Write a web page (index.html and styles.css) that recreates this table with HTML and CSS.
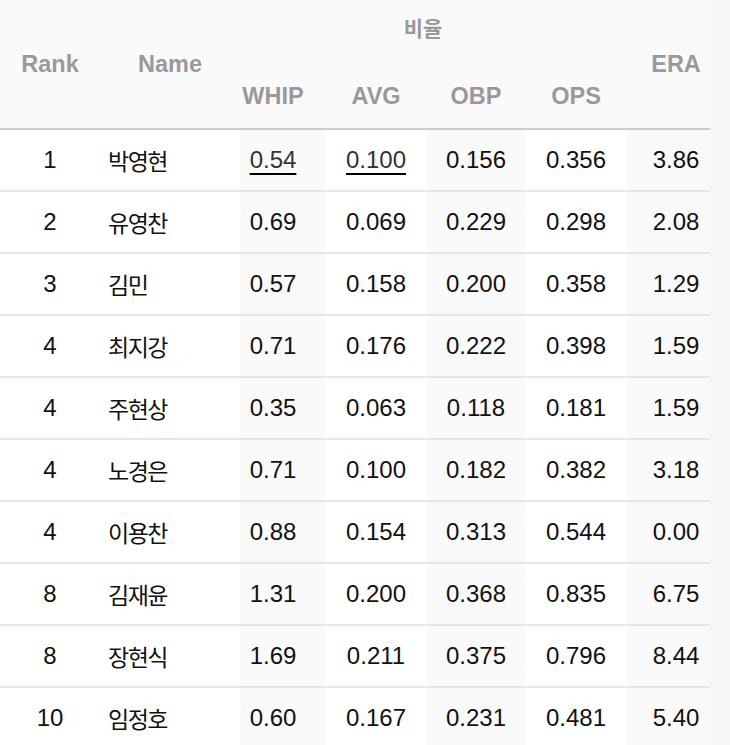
FILE: index.html
```html
<!DOCTYPE html>
<html lang="ko">
<head>
<meta charset="utf-8">
<title>비율</title>
<link rel="stylesheet" href="styles.css">
</head>
<body>
<div class="wrap">
  <table class="stats">
    <colgroup>
      <col class="c-rank"><col class="c-name"><col class="c-whip"><col class="c-avg"><col class="c-obp"><col class="c-ops"><col class="c-era">
    </colgroup>
    <thead>
      <tr class="h1">
        <th rowspan="2" class="rank">Rank</th>
        <th rowspan="2" class="name">Name</th>
        <th colspan="4" class="group">비율</th>
        <th rowspan="2" class="era">ERA</th>
      </tr>
      <tr class="h2">
        <th class="whip">WHIP</th>
        <th class="avg">AVG</th>
        <th class="obp">OBP</th>
        <th class="ops">OPS</th>
      </tr>
    </thead>
    <tbody>
      <tr><td class="rank">1</td><td class="name">박영현</td><td class="whip alt"><span class="ul">0.54</span></td><td class="avg"><span class="ul">0.100</span></td><td class="obp alt">0.156</td><td class="ops">0.356</td><td class="era alt">3.86</td></tr>
      <tr><td class="rank">2</td><td class="name">유영찬</td><td class="whip alt">0.69</td><td class="avg">0.069</td><td class="obp alt">0.229</td><td class="ops">0.298</td><td class="era alt">2.08</td></tr>
      <tr><td class="rank">3</td><td class="name">김민</td><td class="whip alt">0.57</td><td class="avg">0.158</td><td class="obp alt">0.200</td><td class="ops">0.358</td><td class="era alt">1.29</td></tr>
      <tr><td class="rank">4</td><td class="name">최지강</td><td class="whip alt">0.71</td><td class="avg">0.176</td><td class="obp alt">0.222</td><td class="ops">0.398</td><td class="era alt">1.59</td></tr>
      <tr><td class="rank">4</td><td class="name">주현상</td><td class="whip alt">0.35</td><td class="avg">0.063</td><td class="obp alt">0.118</td><td class="ops">0.181</td><td class="era alt">1.59</td></tr>
      <tr><td class="rank">4</td><td class="name">노경은</td><td class="whip alt">0.71</td><td class="avg">0.100</td><td class="obp alt">0.182</td><td class="ops">0.382</td><td class="era alt">3.18</td></tr>
      <tr><td class="rank">4</td><td class="name">이용찬</td><td class="whip alt">0.88</td><td class="avg">0.154</td><td class="obp alt">0.313</td><td class="ops">0.544</td><td class="era alt">0.00</td></tr>
      <tr><td class="rank">8</td><td class="name">김재윤</td><td class="whip alt">1.31</td><td class="avg">0.200</td><td class="obp alt">0.368</td><td class="ops">0.835</td><td class="era alt">6.75</td></tr>
      <tr><td class="rank">8</td><td class="name">장현식</td><td class="whip alt">1.69</td><td class="avg">0.211</td><td class="obp alt">0.375</td><td class="ops">0.796</td><td class="era alt">8.44</td></tr>
      <tr><td class="rank">10</td><td class="name">임정호</td><td class="whip alt">0.60</td><td class="avg">0.167</td><td class="obp alt">0.231</td><td class="ops">0.481</td><td class="era alt">5.40</td></tr>
    </tbody>
  </table>
</div>
</body>
</html>
```
FILE: styles.css
```css
html, body {
  margin: 0;
  padding: 0;
  background: #f6f7f9;
  overflow: hidden;
}
body {
  font-family: "Liberation Sans", "Noto Sans CJK KR", sans-serif;
}
.wrap {
  width: 710px;
  background: #ffffff;
  border-top-right-radius: 10px;
  overflow: hidden;
}
.stats {
  width: 710px;
  table-layout: fixed;
  border-collapse: separate;
  border-spacing: 0;
}
.c-rank { width: 100px; }
.c-name { width: 140px; }
.c-whip { width: 86px; }
.c-avg { width: 100px; }
.c-obp { width: 100px; }
.c-ops { width: 100px; }
.c-era { width: 84px; }

.stats th {
  background: #fafafa;
  color: #999999;
  font-weight: bold;
  font-size: 23.5px;
  text-align: center;
  padding: 0;
  white-space: nowrap;
}
.stats thead .h1 th { height: 64px; }
.stats thead .h2 th { height: 64px; border-bottom: 2px solid #cccccc; }
.stats thead .h1 th[rowspan] { border-bottom: 2px solid #cccccc; }
.stats thead .h1 th.group {
  font-size: 21px;
  line-height: 24px;
  height: 58px;
  padding: 0 20px 6px 0;
  vertical-align: middle;
}
.stats th.whip { padding-right: 20px; }
.stats th.era { padding-left: 20px; padding-right: 4px; }

.stats td {
  height: 60px;
  padding: 0;
  border-bottom: 2px solid #e6e6e6;
  font-size: 24px;
  color: #111111;
  text-align: center;
  vertical-align: middle;
  white-space: nowrap;
}
.stats td.alt { background: #fafafa; }
.stats td.name {
  text-align: left;
  padding-left: 8px;
  font-size: 23px;
  letter-spacing: -1.5px;
}
.stats td.whip { padding-right: 20px; }
.stats td.era { padding-left: 20px; padding-right: 4px; }
.ul {
  color: #333333;
  text-decoration: underline;
  text-decoration-color: #000000;
  text-decoration-thickness: 2px;
  text-underline-offset: 5px;
}
```
